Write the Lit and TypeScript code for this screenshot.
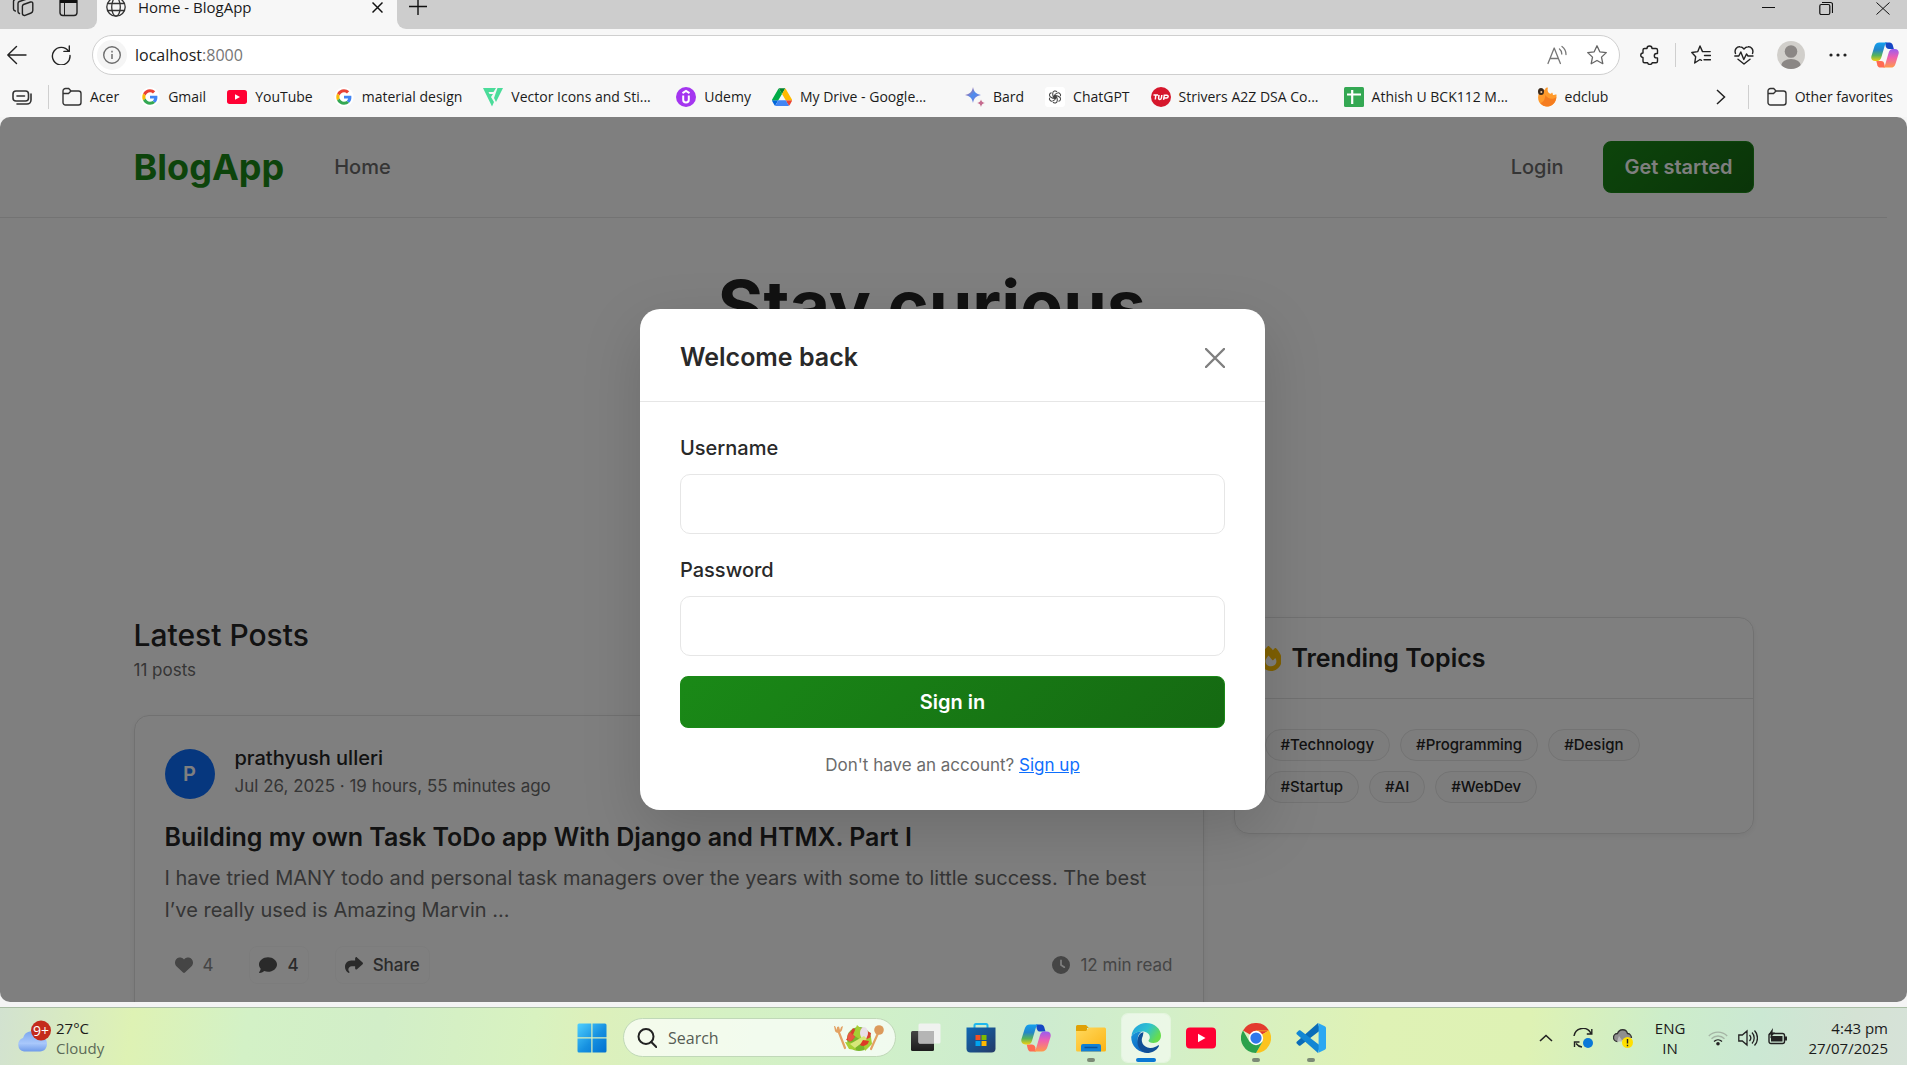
import { LitElement, html, css, svg, TemplateResult } from "lit";
import { customElement } from "lit/decorators.js";

/* ---------- shared icons ---------- */

const folder = html`<svg class="i20" viewBox="0 0 20 20" fill="none" stroke="#333" stroke-width="1.4">
  <path d="M1 5.500V4a2.500 2.500 0 0 1 2.500-2.500h3.200L9 4h7.500A2.500 2.500 0 0 1 19 6.500v9a2.500 2.500 0 0 1-2.500 2.500h-13A2.500 2.500 0 0 1 1 15.500z"/>
  <path d="M1 6.500h5.500L9 4"/></svg>`;

const google = html`<svg class="i20" viewBox="-7 -7 62 62">
  <circle cx="24" cy="24" r="30" fill="#fff"/>
  <path fill="#EA4335" d="M24 9.500c3.540 0 6.710 1.220 9.210 3.600l6.850-6.850C35.900 2.380 30.470 0 24 0 14.620 0 6.510 5.380 2.560 13.220l7.980 6.190C12.430 13.720 17.740 9.500 24 9.500z"/>
  <path fill="#4285F4" d="M46.980 24.550c0-1.570-.15-3.090-.38-4.550H24v9.020h12.940c-.58 2.960-2.260 5.480-4.780 7.180l7.730 6c4.510-4.180 7.090-10.360 7.090-17.650z"/>
  <path fill="#FBBC05" d="M10.530 28.590c-.48-1.450-.76-2.990-.76-4.590s.27-3.140.76-4.590l-7.980-6.190C.92 16.460 0 20.120 0 24c0 3.880.92 7.540 2.560 10.780l7.970-6.190z"/>
  <path fill="#34A853" d="M24 48c6.480 0 11.930-2.130 15.890-5.810l-7.730-6c-2.150 1.450-4.920 2.300-8.160 2.300-6.260 0-11.570-4.220-13.470-9.910l-7.980 6.190C6.510 42.620 14.620 48 24 48z"/></svg>`;

const youtube = (cls: string) => html`<svg class=${cls} viewBox="0 0 30 30">
  <rect x="0" y="4.500" width="30" height="21" rx="4" fill="#ff0033"/><path d="M12 10.800v8.400l7.500-4.200z" fill="#fff"/></svg>`;

const copilot = (cls: string, id: string) => html`<svg class=${cls} viewBox="0 0 30 30">
  <defs>
    <linearGradient id="${id}a" x1="0" y1="0" x2="0" y2="1"><stop offset="0" stop-color="#12a0f0"/><stop offset=".4" stop-color="#2386c9"/><stop offset=".7" stop-color="#58b35a"/><stop offset="1" stop-color="#f2cf10"/></linearGradient>
    <linearGradient id="${id}b" x1="0" y1="0" x2="0" y2="1"><stop offset="0" stop-color="#9a5cf0"/><stop offset=".45" stop-color="#ee5fb0"/><stop offset="1" stop-color="#ff9a4a"/></linearGradient>
  </defs>
  <path d="M15 1.500h5c1.600 0 2.700 1 3.200 2.600l1.300 4.400h-5.200c-2 0-2.900-.8-3.500-2.800z" fill="#1547c4"/>
  <path d="M15 28.500h-5c-1.600 0-2.700-1-3.200-2.600L5.700 21.500h5c2 0 3 .8 3.500 2.800z" fill="#ff6b52"/>
  <path d="M9 1.500h8.500c-1.600.4-2.200 1.700-2.800 3.700l-3.600 12.300c-.7 2.500-2 4-4.600 4H4.300C1.200 21.500-.4 19 .5 16L3.700 5.700C4.500 3 6.200 1.500 9 1.500z" fill="url(#${id}a)"/>
  <path d="M21 28.500h-8.500c1.600-.4 2.200-1.700 2.800-3.700l3.600-12.300c.7-2.500 2-4 4.600-4h2.200c3.100 0 4.700 2.500 3.800 5.500l-3.200 10.300c-.8 2.700-2.500 4.200-5.300 4.200z" fill="url(#${id}b)"/></svg>`;

const fa = (w: number, d: string) => html`<svg class="fa" viewBox="0 0 ${w} 512"><path fill="currentColor" d=${d}/></svg>`;

const iconCss = css`
  * { box-sizing: border-box; }
  svg { display: block; flex: none; }
  button { font: inherit; color: inherit; background: none; border: 0; padding: 0; margin: 0; cursor: pointer; display: flex; align-items: center; justify-content: center; }
  .i20 { width: 20px; height: 20px; }
  .i28 { width: 28px; height: 28px; }
  .i30 { width: 30px; height: 30px; }
`;

/* ---------- browser chrome ---------- */

const favourites: { label: string; icon: TemplateResult; clipped?: boolean }[] = [
  { label: "Acer", icon: folder },
  { label: "Gmail", icon: google },
  { label: "YouTube", icon: youtube("i20") },
  { label: "material design", icon: google },
  { label: "Vector Icons and Sti...", clipped: true, icon: html`<svg class="i20" viewBox="0 0 20 20"><path d="M0 1h13l-2.500 4H5.500l1 2H10L8 10l3 5-2 4.500z" fill="#4bdc9a"/><path d="M14.500 1H20l-7 14-2-4z" fill="#4bdc9a"/></svg>` },
  { label: "Udemy", icon: html`<svg class="i20" viewBox="0 0 20 20"><circle cx="10" cy="10" r="10" fill="#a435f0"/><path d="M6.500 6.200 10 4l3.500 2.200M7.200 8.500v4.200a2.800 2.800 0 0 0 5.600 0V8.500" fill="none" stroke="#fff" stroke-width="2"/></svg>` },
  { label: "My Drive - Google...", clipped: true, icon: html`<svg class="i20" viewBox="0 0 87 87"><g transform="translate(0 5)"><path d="M6.600 66.850l3.850 6.650c.8 1.400 1.950 2.500 3.300 3.300L27.500 53H0c0 1.550.4 3.100 1.200 4.500z" fill="#0066da"/><path d="M43.650 25 29.900 1.200c-1.350.8-2.500 1.900-3.300 3.300l-25.400 44A9 9 0 0 0 0 53h27.500z" fill="#00ac47"/><path d="M73.550 76.800c1.350-.8 2.500-1.900 3.300-3.300l1.600-2.750L86.100 57.500c.8-1.400 1.200-2.950 1.200-4.500H59.800l5.850 11.500z" fill="#ea4335"/><path d="M43.650 25 57.400 1.200C56.050.4 54.500 0 52.900 0H34.400c-1.600 0-3.150.45-4.500 1.200z" fill="#00832d"/><path d="M59.800 53H27.500L13.750 76.800c1.350.8 2.900 1.200 4.500 1.200h50.800c1.600 0 3.150-.45 4.500-1.200z" fill="#4285f4"/><path d="M73.400 26.500 60.700 4.500c-.8-1.400-1.950-2.500-3.300-3.300L43.650 25 59.800 53h27.450c0-1.550-.4-3.100-1.200-4.500z" fill="#ffba00"/></g></svg>` },
  { label: "Bard", icon: html`<svg class="i20" viewBox="0 0 20 20"><defs><linearGradient id="bd" x1="0" y1="0" x2="1" y2="1"><stop offset="0" stop-color="#e0627a"/><stop offset=".5" stop-color="#4c8df0"/><stop offset="1" stop-color="#9a6ec0"/></linearGradient></defs><path d="M8 0c1 5 3 7 8 8-5 1-7 3-8 8-1-5-3-7-8-8 5-1 7-3 8-8z" fill="url(#bd)"/><path d="M16 12.500c.5 2 1.500 3 3.800 3.500-2.300.5-3.300 1.500-3.800 4-.5-2.500-1.500-3.500-3.800-4 2.300-.5 3.300-1.500 3.800-3.500z" fill="#c56a8e"/></svg>` },
  { label: "ChatGPT", icon: html`<svg class="i20" viewBox="0 0 20 20"><rect width="20" height="20" rx="3" fill="#fff"/><g transform="translate(2 2) scale(.8)" fill="none" stroke="#444" stroke-width="1.300">${[0, 60, 120, 180, 240, 300].map((a) => svg`<path transform="rotate(${a} 10 10)" d="M7.200 8.400V5.200a2.900 2.900 0 0 1 5.300-1.500M7.200 8.400l4.200 2.400M9.300 12V7.200"/>`)}</g></svg>` },
  { label: "Strivers A2Z DSA Co...", clipped: true, icon: html`<svg class="i20" viewBox="0 0 20 20"><circle cx="10" cy="10" r="10" fill="#d6172c"/><path d="M2.500 8h4.600M4.800 8l-.5 4.500M8 8l-.4 3c-.1 1 .3 1.400 1.200 1.400s1.500-.4 1.600-1.400l.4-3M12.600 12.800l.7-4.600h2.500c2 0 1.700 2.800-.4 2.800H13" fill="none" stroke="#fff" stroke-width="1.500"/></svg>` },
  { label: "Athish U BCK112 M...", clipped: true, icon: html`<svg class="i20" viewBox="0 0 20 20"><rect width="20" height="20" rx="1.500" fill="#34a853"/><path d="M8.200 3v14M3 7.500h14" stroke="#fff" stroke-width="2.200"/></svg>` },
  { label: "edclub", icon: html`<svg class="i20" viewBox="0 0 20 20"><path d="M2 6c2-4 5-4 6-3 0-2 2-3 3-2-1 2 0 4 1 5 1 1 2 1 3-.5 1 1 1 2 .8 2.500 1.500 0 2.500-.5 3.700-.5.500 7-3.500 12-9.500 12C4 19.500-1 14 2 6z" fill="#ff9a2b"/><path d="M10 19.500c5 0 9-4 9.300-9.500-3 3-9 2-11-2 0 5-3 8-5 8 2 2.500 4 3.500 6.700 3.500z" fill="#f57c1f"/><ellipse cx="4" cy="4.500" rx="3" ry="3.600" fill="#3b2a1c"/><circle cx="4.300" cy="5" r="1" fill="#f5c99a"/></svg>` },
];

@customElement("browser-chrome")
class BrowserChrome extends LitElement {
  static styles = [iconCss, css`
    :host { display: block; background: #f7f7f7; color: #1b1b1b; font: 14px/20px "Segoe UI", "Open Sans", "Noto Sans", sans-serif; }
    .tabs { display: flex; height: 29px; background: #f7f7f7; }
    .left { width: 97px; background: #cdcdcd; border-bottom-right-radius: 9px; display: flex; gap: 24px; padding: 0 0 12px 12px; align-items: flex-end; }
    .tab { width: 300px; display: flex; align-items: flex-end; gap: 12px; padding: 0 14px 12px 9px; font-size: 15px; line-height: 14px; }
    .tab .title { flex: 1; padding-bottom: 3px; }
    .right { flex: 1; background: #cdcdcd; border-bottom-left-radius: 9px; display: flex; align-items: flex-start; padding: 0 17px 0 12px; }
    .win { margin-left: auto; display: flex; gap: 43px; }
    .bar { display: flex; align-items: center; height: 52px; padding: 0 8px 0 7px; }
    .nav { display: flex; gap: 24px; width: 85px; }
    .address { flex: 1; height: 40px; display: flex; align-items: center; gap: 8px; background: #fff; border: 1px solid #cfcfcf; border-radius: 20px; padding: 0 12px 0 4px; font-size: 16px; }
    .address .info { width: 30px; height: 30px; border-radius: 50%; background: #f5f5f5; }
    .address .url { flex: 1; }
    .address .port { color: #767676; }
    .address .acts { display: flex; gap: 20px; }
    .tools { display: flex; align-items: center; gap: 23px; margin-left: 20px; }
    .sep { width: 1px; height: 24px; background: #cfcfcf; }
    .tools .sep { margin: 0 -8px; }
    .favs { display: flex; align-items: center; height: 36px; padding: 0 14px 4px 12px; white-space: nowrap; }
    .favs > .sep { margin: 0 13px 0 16px; }
    .favs a { display: flex; align-items: center; gap: 8px; color: inherit; text-decoration: none; margin-right: 21px; }
    .favs a:last-child { margin: 0; }
    .clipped { min-width: 144px; }
    .more { margin-left: auto; }
    .favs > .sep.end { margin: 0 18px 0 22px; }
  `];

  render() {
    const s = (d: string, cls = "i20", w = 1.4, c = "#222") => html`<svg class=${cls} viewBox="0 0 20 20" fill="none" stroke=${c} stroke-width=${w} stroke-linecap="round" stroke-linejoin="round"><path d=${d}/></svg>`;
    return html`
      <div class="tabs">
        <div class="left">
          <button aria-label="Workspaces"><svg width="22" height="20" viewBox="0 0 22 20" fill="none" stroke="#222" stroke-width="1.400" stroke-linecap="round"><path d="M11.500 7.500 18.500 5a1.700 1.700 0 0 1 2.300 1.600v7a2.600 2.600 0 0 1-1.700 2.400l-6 2.400a2 2 0 0 1-2.700-1.800V9.200a2 2 0 0 1 1.100-1.700zM7.500 16.500C6.400 16.200 6 15.500 6 14.500V6.500c0-1 .5-1.700 1.300-2L15 2M3.300 14C2 13.700 1.500 13 1.500 12V4.500c0-1 .5-1.700 1.300-2L10 0"/></svg></button>
          <button aria-label="Tab actions"><svg class="i20" viewBox="0 0 20 20"><rect x="2" y="1" width="17" height="17.500" rx="3" fill="none" stroke="#222" stroke-width="1.400"/><path d="M2 1h17v5H2z" fill="#111"/><path d="M6.500 6v12" stroke="#222"/></svg></button>
        </div>
        <div class="tab">
          <svg class="i20" viewBox="0 0 20 20" fill="none" stroke="#333" stroke-width="1.300"><circle cx="10" cy="10" r="9.200"/><ellipse cx="10" cy="10" rx="4.300" ry="9.200"/><path d="M1.800 6.500h16.400M1.800 13.500h16.400"/></svg>
          <span class="title">Home - BlogApp</span>
          <button aria-label="Close tab"><svg width="11" height="16" viewBox="0 0 11 16"><path d="M.5 1.500l10 10M10.500 1.500l-10 10" stroke="#111" stroke-width="1.500"/></svg></button>
        </div>
        <div class="right">
          <button aria-label="New tab"><svg width="18" height="16" viewBox="0 0 18 16"><path d="M0 6.500h18M9 0v15" stroke="#111" stroke-width="1.400"/></svg></button>
          <div class="win">
            <button aria-label="Minimise"><svg width="14" height="16" viewBox="0 0 14 16"><path d="M0 7.500h13" stroke="#111"/></svg></button>
            <button aria-label="Restore"><svg width="14" height="16" viewBox="0 0 14 16" fill="none" stroke="#111" stroke-width="1.200"><rect x=".8" y="4.500" width="10" height="10" rx="1.500"/><path d="M3 2.500h8.500a2 2 0 0 1 2 2V13"/></svg></button>
            <button aria-label="Close"><svg width="14" height="16" viewBox="0 0 14 16"><path d="M.5 2.500l13 12M13.500 2.500l-13 12" stroke="#111"/></svg></button>
          </div>
        </div>
      </div>
      <div class="bar">
        <div class="nav">
          <button aria-label="Back">${s("M19 10H.8M9.500 1.500.8 10l8.700 8.500")}</button>
          <button aria-label="Refresh">${s("M17.500 6.200A8.800 8.800 0 1 0 19 10.500M18.300 1v5.400h-5.400")}</button>
        </div>
        <div class="address">
          <button class="info" aria-label="Site information"><svg class="i20" viewBox="0 0 20 20"><circle cx="10" cy="10" r="8.300" fill="none" stroke="#6d6d6d" stroke-width="1.400"/><path d="M10 9v5M10 5.800v1.600" stroke="#6d6d6d" stroke-width="1.500"/></svg></button>
          <span class="url">localhost<span class="port">:8000</span></span>
          <div class="acts">
            <button aria-label="Read aloud">${s("M1 18.500 7.200 3l6.200 15.500M3 13.500h8.400M12.500 4c1.600 1.200 2.300 2.800 2.300 5M15 1.500c2.800 2 4 4.200 4 8", "i20", 1.3, "#777")}</button>
            <button aria-label="Add to favourites">${s("m10 .8 2.800 6 6.500.8-4.800 4.500 1.300 6.600L10 15.500l-5.800 3.200 1.300-6.600L.7 7.600l6.500-.8z", "i20", 1.3, "#666")}</button>
          </div>
        </div>
        <div class="tools">
          <button aria-label="Extensions">${s("M7 3.500a2.500 2.500 0 0 1 5 0h4a1.500 1.500 0 0 1 1.500 1.500v3.500h-1a2.200 2.200 0 0 0 0 4.400h1v3.300a1.500 1.500 0 0 1-1.500 1.500h-3.800a2.400 2.400 0 0 1-4.600 0H4.500A1.500 1.500 0 0 1 3 16.200V12.500a2.200 2.200 0 0 1 0-4.500V5a1.500 1.500 0 0 1 1.500-1.500z")}</button>
          <span class="sep"></span>
          <button aria-label="Favourites">${s("M10.500 15.300 9 14.500l-5.300 3.500 1-6.300L.8 7.500l6-.9L9 1l2.500 5.600h7.700M13.500 10.500h6M13 14.800h6.500")}</button>
          <button aria-label="Browser essentials">${s("M1.500 8.500C0 4.500 3 1.500 6 1.800c2 .1 3.200 1.200 4 2.200.8-1 2-2.100 4-2.200 3-.3 6 2.700 4.500 6.700M.8 11h4l2-4 3 7.500L12.500 9l1.500 2h5M4 14.200l6 4.800 6-4.800")}</button>
          <button aria-label="Profile"><svg class="i28" viewBox="0 0 28 28"><defs><clipPath id="pc"><circle cx="14" cy="14" r="14"/></clipPath></defs><circle cx="14" cy="14" r="14" fill="#d1cfcb"/><g clip-path="url(#pc)" fill="#8b8785"><circle cx="14" cy="10.500" r="6.300"/><ellipse cx="14" cy="25" rx="10" ry="7"/></g></svg></button>
          <button aria-label="Settings and more"><svg class="i20" viewBox="0 0 20 20" fill="#222"><circle cx="3" cy="10" r="1.600"/><circle cx="10" cy="10" r="1.600"/><circle cx="17" cy="10" r="1.600"/></svg></button>
          <button aria-label="Copilot">${copilot("i28", "t")}</button>
        </div>
      </div>
      <nav class="favs">
        <button aria-label="Collections"><svg class="i20" viewBox="0 0 20 20" fill="none" stroke="#333" stroke-width="1.600"><rect x="1" y="4" width="15.500" height="10" rx="3"/><path d="M5 9h7.500M19 7v6a4 4 0 0 1-4 4H5" stroke-linecap="round"/></svg></button>
        <span class="sep"></span>
        ${favourites.map((f) => html`<a href="#">${f.icon}<span class=${f.clipped ? "clipped" : ""}>${f.label}</span></a>`)}
        <button class="more" aria-label="More favourites"><svg width="10" height="16" viewBox="0 0 10 16"><path d="M1 1l7.500 7L1 15" fill="none" stroke="#222" stroke-width="1.500"/></svg></button>
        <span class="sep end"></span>
        <a href="#">${folder}<span>Other favorites</span></a>
      </nav>`;
  }
}

/* ---------- blog page ---------- */

const topics = ["#Technology", "#Programming", "#Design", "#Startup", "#AI", "#WebDev"];

@customElement("blog-page")
class BlogPage extends LitElement {
  static styles = [iconCss, css`
    :host { display: block; position: relative; overflow: hidden; background: #fff; border-radius: 10px; color: #242424; font: 20px/30px Inter, "Liberation Sans", sans-serif; }
    h1, h2, h3, p { margin: 0; }
    a { color: inherit; text-decoration: none; }
    .page { padding-right: 20px; }
    .container { max-width: 1620px; margin: 0 auto; }
    .top { border-bottom: 1px solid #e6e6e6; }
    .top .container { display: flex; align-items: center; height: 100px; font-weight: 500; color: #6b6b6b; }
    .brand { font-size: 36px; line-height: 44px; font-weight: 700; color: #1a8917; margin-right: 50px; }
    .login { margin-left: auto; margin-right: 40px; }
    .cta { height: 52px; border: 1px solid #1a8917; border-radius: 8px; background: linear-gradient(135deg, #1a8917, #156912); color: #fff; font-weight: 600; }
    .top .cta { padding: 0 20px; }
    .hero { min-height: 399px; padding-top: 46px; text-align: center; }
    .hero h1 { font-size: 70px; line-height: 84px; font-weight: 700; }
    .cols { display: grid; grid-template-columns: 107fr 52fr; gap: 30px; align-items: start; }
    .cols h2 { font-size: 30px; line-height: 36px; font-weight: 500; }
    .count { font-size: 17px; line-height: 26px; margin: 4px 0 32px; color: #6b6b6b; }
    .card { border: 1px solid #e3e3e3; border-radius: 15px; box-shadow: 0 2px 6px rgba(0, 0, 0, 0.06); }
    .post { padding: 30px; min-height: 340px; }
    .author { display: flex; align-items: center; gap: 20px; margin-bottom: 20px; }
    .avatar { width: 50px; height: 50px; border-radius: 50%; background: #0d6efd; color: #fff; font-weight: 600; display: grid; place-items: center; }
    .who { display: grid; gap: 4px; line-height: 24px; padding-bottom: 4px; font-weight: 500; }
    .meta { font-size: 17px; font-weight: 400; color: #6b6b6b; }
    .post h3, .trend h3 { font-size: 25px; line-height: 30px; font-weight: 600; }
    .text { margin: 10px 0 20px; line-height: 32px; color: #6b6b6b; }
    .acts { display: flex; align-items: center; gap: 26px; font-size: 17px; color: #555; }
    .acts button { height: 38px; padding: 0 9px; gap: 10px; border: 1px solid #f9f9f9; border-radius: 8px; font-weight: 500; }
    .acts .like { font-weight: 400; color: #8a8a8a; border-color: transparent; }
    .read { margin-left: auto; display: flex; align-items: center; gap: 10px; color: #8a8a8a; }
    .fa { height: 18px; }
    .trend .head { display: flex; align-items: center; gap: 10px; padding: 25px; border-bottom: 1px solid #e3e3e3; }
    .fire { color: #ffc107; }
    .fire .fa { height: 25px; }
    .pills { display: flex; flex-wrap: wrap; gap: 10px; padding: 30px 90px 30px 30px; }
    .pills a { height: 32px; line-height: 30px; padding: 0 15px; font-size: 15px; font-weight: 500; border: 1px solid #e6e6e6; border-radius: 16px; background: #fafafa; }
    .overlay { position: absolute; inset: 0; display: grid; place-items: center; padding-right: 2px; background: rgba(0, 0, 0, 0.5); }
    .modal { width: 625px; background: #fff; border-radius: 20px; box-shadow: 0 20px 60px rgba(0, 0, 0, 0.15); color: #292929; }
    .mhead { display: flex; align-items: center; justify-content: space-between; padding: 30px 40px 25px; border-bottom: 1px solid #e6e6e6; }
    .mhead h2 { font-size: 25px; line-height: 37px; font-weight: 600; }
    form { display: flex; flex-direction: column; padding: 30px 40px 32px; }
    label { font-weight: 500; line-height: 32px; margin-bottom: 10px; }
    input { width: 100%; height: 60px; margin: 0 0 20px; padding: 0 20px; border: 1px solid #e6e6e6; border-radius: 10px; font: inherit; color: inherit; background: #fff; outline: none; }
    .foot { margin-top: 24px; font-size: 17px; line-height: 26px; text-align: center; color: #6b6b6b; }
    .foot a { color: #0d6efd; text-decoration: underline; }
  `];

  render() {
    return html`
      <div class="page">
        <header class="top"><div class="container">
          <a class="brand" href="#">BlogApp</a>
          <a href="#">Home</a>
          <a class="login" href="#">Login</a>
          <button class="cta">Get started</button>
        </div></header>
        <section class="hero"><h1>Stay curious.</h1></section>
        <div class="container cols">
          <main>
            <h2>Latest Posts</h2>
            <p class="count">11 posts</p>
            <article class="card post">
              <div class="author">
                <span class="avatar">P</span>
                <div class="who"><span>prathyush ulleri</span><span class="meta">Jul 26, 2025 · 19 hours, 55 minutes ago</span></div>
              </div>
              <h3>Building my own Task ToDo app With Django and HTMX. Part I</h3>
              <p class="text">I have tried MANY todo and personal task managers over the years with some to little success. The best I’ve really used is Amazing Marvin ...</p>
              <div class="acts">
                <button class="like">${fa(512, "M47.600 300.400 228.300 469.100c7.500 7 17.400 10.900 27.700 10.900s20.200-3.900 27.700-10.900L464.400 300.400c30.400-28.300 47.600-68 47.600-109.500v-5.800c0-69.900-50.500-129.500-119.400-141C347 36.500 300.600 51.400 268 84L256 96 244 84c-32.600-32.600-79-47.500-124.600-39.900C50.500 55.600 0 115.200 0 185.100v5.800c0 41.500 17.200 81.200 47.600 109.500z")}4</button>
                <button>${fa(512, "M512 240c0 114.900-114.600 208-256 208c-37.100 0-72.300-6.400-104.100-17.900c-11.900 8.700-31.300 20.600-54.300 30.600C73.600 471.100 44.700 480 16 480c-6.500 0-12.300-3.900-14.800-9.900c-2.500-6-1.100-12.800 3.400-17.400c2-2 13-15 21.700-29c10-16.600 19.500-38.400 21.400-62.900C17.700 326.800 0 285.100 0 240C0 125.100 114.600 32 256 32s256 93.100 256 208z")}4</button>
                <button>${fa(512, "M307 34.800c-11.500 5.100-19 16.600-19 29.200v64H176C78.800 128 0 206.800 0 304C0 417.300 81.500 467.900 100.200 478.100c2.500 1.400 5.300 1.900 8.100 1.900c10.900 0 19.700-8.900 19.700-19.700c0-7.500-4.300-14.400-9.800-19.500C108.800 431.900 96 414.400 96 384c0-53 43-96 96-96h96v64c0 12.600 7.400 24.100 19 29.200s25 3 34.400-5.400l160-144c6.700-6.100 10.600-14.700 10.600-23.800s-3.800-17.700-10.600-23.800l-160-144c-9.400-8.500-22.900-10.600-34.400-5.400z")}Share</button>
                <span class="read">${fa(512, "M256 0a256 256 0 1 1 0 512A256 256 0 1 1 256 0zM232 120V256c0 8 4 15.500 10.700 20l96 64c11 7.400 25.900 4.400 33.300-6.700s4.400-25.900-6.700-33.300L280 243.200V120c0-13.300-10.700-24-24-24s-24 10.700-24 24z")}12 min read</span>
              </div>
            </article>
          </main>
          <aside class="card trend">
            <div class="head">
              <span class="fire">${fa(448, "M159.300 5.400c7.800-7.300 19.900-7.200 27.700 .1c27.600 25.900 53.500 53.800 77.700 84c11-14.400 23.500-30.100 37-42.900c7.900-7.400 20.100-7.400 28 .1c34.600 33 63.900 76.600 84.500 118c20.300 40.800 33.800 82.500 33.800 111.900C448 404.200 348.200 512 224 512C98.400 512 0 404.100 0 276.500c0-38.400 17.800-85.300 45.400-131.700C73.300 97.700 112.700 48.600 159.300 5.400zM225.700 416c25.300 0 47.700-7 68.800-21c42.100-29.400 53.400-88.200 28.100-134.400c-4.500-9-16-9.600-22.500-2l-25.200 29.300c-6.600 7.600-18.500 7.400-24.700-.5c-16.500-21-46-58.500-62.800-79.800c-6.300-8-18.300-8.100-24.700-.1c-33.800 42.500-50.800 69.300-50.800 99.400C112 375.400 162.600 416 225.700 416z")}</span>
              <h3>Trending Topics</h3>
            </div>
            <div class="pills">${topics.map((t) => html`<a href="#">${t}</a>`)}</div>
          </aside>
        </div>
      </div>
      <div class="overlay">
        <section class="modal" role="dialog" aria-labelledby="mt">
          <div class="mhead">
            <h2 id="mt">Welcome back</h2>
            <button aria-label="Close"><svg class="i20" viewBox="0 0 20 20"><path d="M1 1l18 18M19 1 1 19" stroke="#7f7f7f" stroke-width="2.400" stroke-linecap="round"/></svg></button>
          </div>
          <form>
            <label for="user">Username</label>
            <input id="user" type="text">
            <label for="pass">Password</label>
            <input id="pass" type="password">
            <button class="cta" type="button">Sign in</button>
            <p class="foot">Don't have an account? <a href="#">Sign up</a></p>
          </form>
        </section>
      </div>`;
  }
}

/* ---------- taskbar ---------- */

@customElement("task-bar")
class TaskBar extends LitElement {
  static styles = [iconCss, css`
    :host { box-sizing: border-box; display: grid; grid-template-columns: 1fr auto 1fr; align-items: center; height: 58px; padding-top: 2px; border-top: 1px solid #a9bda4; color: #1b1b1b; font: 15px/20px "Segoe UI", "Open Sans", "Noto Sans", sans-serif;
      background: linear-gradient(98deg, #d2e2d0 0%, #def2b4 7%, #d3f1c6 13%, #d2eec8 20%, #d8f2c0 28%, #ddf0bb 31%, #d5f1c4 38%, #d0f0c9 46%, #cdebd0 54%, #d3efc8 61%, #dff2b5 72%, #def2b4 80%, #cdedca 87%, #cbe8d3 92%, #d4e2d4 97%, #d6e2d8 100%); }
    .weather { display: flex; align-items: center; gap: 4px; padding-left: 16px; }
    .sub { color: #5c6a58; }
    .apps { display: flex; align-items: center; gap: 7px; padding-right: 4px; }
    .app { width: 48px; height: 48px; border-radius: 6px; position: relative; }
    .app.on { background: rgba(255, 255, 255, 0.55); box-shadow: 0 0 0 1px rgba(255, 255, 255, 0.4); }
    .app.run::after, .app.on::after { content: ""; position: absolute; bottom: 0; left: 20px; width: 8px; height: 4px; border-radius: 2px; background: #7b8a76; }
    .app.on::after { left: 14px; width: 20px; background: #0a78d4; }
    .search { display: flex; align-items: center; gap: 11px; width: 273px; height: 39px; margin-right: -1px; padding: 0 10px 0 13px; border-radius: 20px; background: rgba(255, 255, 255, 0.7); border: 1px solid #c0d8b8; }
    .search input { flex: 1; min-width: 0; border: 0; padding: 0; background: none; outline: none; font: 16px/22px "Segoe UI", "Open Sans", "Noto Sans", sans-serif; color: #4a4f48; }
    .search input::placeholder { color: #565c54; opacity: 1; }
    .tray { display: flex; align-items: center; justify-content: flex-end; padding-right: 19px; gap: 20px; }
    .center { text-align: center; margin: 0 3px 0 2px; }
    .net { gap: 10px; }
    .end { text-align: right; }
  `];

  render() {
    const app = (label: string, state: string, icon: TemplateResult) => html`<button class="app ${state}" aria-label=${label}>${icon}</button>`;
    return html`
      <div class="weather">
        <svg width="36" height="36" viewBox="0 0 36 36"><defs><linearGradient id="cl" x1="0" y1="0" x2="0" y2="1"><stop offset="0" stop-color="#7aa6ee"/><stop offset=".6" stop-color="#a9c8fb"/><stop offset="1" stop-color="#6f9bea"/></linearGradient></defs><path d="M8 31.500a7 7 0 0 1-1-13.500 9 9 0 0 1 17-1.500c4 0 7 3 7 7.300s-2.500 7.700-7 7.700z" fill="url(#cl)"/><circle cx="25" cy="10.500" r="10" fill="#c42b1c"/><text x="25" y="15.500" text-anchor="middle" font-size="14" fill="#fff">9+</text></svg>
        <div><div>27°C</div><div class="sub">Cloudy</div></div>
      </div>
      <div class="apps">
        ${app("Start", "", html`<svg class="i30" viewBox="0 0 30 30"><defs><linearGradient id="st" x1="0" y1="0" x2="1" y2="1"><stop offset="0" stop-color="#4fd0ff"/><stop offset=".55" stop-color="#1690e0"/><stop offset="1" stop-color="#0070d0"/></linearGradient></defs><path d="M2 .5h12.300v13.800H.5V2A1.500 1.500 0 0 1 2 .5zM15.500.5H28A1.500 1.500 0 0 1 29.500 2v12.300h-14zM.5 15.600h13.800v13.900H2A1.500 1.500 0 0 1 .5 28zM15.500 15.600h14V28a1.500 1.500 0 0 1-1.500 1.500H15.500z" fill="url(#st)"/></svg>`)}
        <label class="search">
          <svg class="i20" viewBox="0 0 20 20" fill="none" stroke="#222" stroke-width="2" stroke-linecap="round"><circle cx="9" cy="8.500" r="7.500"/><path d="m14.300 14 5 5"/></svg>
          <input type="text" placeholder="Search" aria-label="Search">
          <svg width="52" height="28" viewBox="0 0 52 28"><path d="M5 6l7 18M46 7l-8 18" stroke="#e3a263" stroke-width="2.200" stroke-linecap="round"/><circle cx="46" cy="6" r="4.800" fill="#dc9a5c"/><path d="M1 2l1 5c1 3 6 2 7-1l1-4-2 1-1 3-1-3.500-2 .5v3L2 2z" fill="#e3a263"/><circle cx="26" cy="15" r="12" fill="#79b52d"/><path d="M13 16l7-12 5 4-6 9zM28 4l10 5-2 12-7-5z" fill="#d8412f"/><path d="M24 1l8 7-4 8-8-5zM12 18l9 1 2 7-7-1zM30 17l8-4 1 7-7 7z" fill="#a6cf34"/><path d="M17 8a6 6 0 0 0 0 10l5-5z" fill="#e85643"/><ellipse cx="31" cy="9" rx="4" ry="6" fill="#e9dfe9"/><path d="M17 20l14-8 3 3-12 9z" fill="#d8e77a"/><path d="M27 21a6 6 0 0 0 9-4l-6-1z" fill="#dd3a27"/></svg>
        </label>
        ${app("Task view", "", html`<svg class="i30" viewBox="0 0 30 30"><defs><linearGradient id="tv" x1="0" y1="0" x2="0" y2="1"><stop offset="0" stop-color="#444"/><stop offset="1" stop-color="#1c1c1c"/></linearGradient></defs><rect x="0" y="8" width="23" height="20" rx="1.500" fill="url(#tv)"/><rect x="7.500" y=".5" width="22" height="20" rx="1.500" fill="#f2f2f2" opacity=".93"/><path d="M7.500 8H23v12.500H9a1.500 1.500 0 0 1-1.500-1.500z" fill="#b5b5b5"/></svg>`)}
        ${app("Microsoft Store", "", html`<svg class="i30" viewBox="0 0 30 30"><defs><linearGradient id="ms" x1="0" y1="0" x2="1" y2="1"><stop offset="0" stop-color="#0f68b4"/><stop offset="1" stop-color="#243a66"/></linearGradient></defs><path d="M8.500 6V2.500a1.500 1.500 0 0 1 1.500-1.500h10a1.500 1.500 0 0 1 1.500 1.500V6" fill="none" stroke="#1fb8ee" stroke-width="2"/><path d="M.5 4.500h29v21a4 4 0 0 1-4 4h-21a4 4 0 0 1-4-4z" fill="url(#ms)"/><path d="M9.500 12h5v5h-5z" fill="#f25022"/><path d="M15.500 12h5v5h-5z" fill="#7fba00"/><path d="M9.500 18h5v5h-5z" fill="#00a4ef"/><path d="M15.500 18h5v5h-5z" fill="#ffb900"/></svg>`)}
        ${app("Copilot", "", copilot("i30", "b"))}
        ${app("File Explorer", "run", html`<svg class="i30" viewBox="0 0 30 30"><defs><linearGradient id="fe" x1="0" y1="0" x2="1" y2="1"><stop offset="0" stop-color="#ffd95e"/><stop offset="1" stop-color="#fcb414"/></linearGradient></defs><path d="M0 3.500A1.500 1.500 0 0 1 1.500 2H10l3 3h-2v4H0z" fill="#e0a106"/><path d="M0 8h10l3-3.500h15.500A1.500 1.500 0 0 1 30 6v21a1.500 1.500 0 0 1-1.500 1.500h-27A1.500 1.500 0 0 1 0 27z" fill="url(#fe)"/><path d="M5 28.500V23a2 2 0 0 1 2-2h16a2 2 0 0 1 2 2v5.500z" fill="#1180d6"/><path d="M8.500 24.500h13" stroke="#0a5299" stroke-width="1.500"/></svg>`)}
        ${app("Microsoft Edge", "on", html`<svg class="i30" viewBox="0 0 30 30"><defs><linearGradient id="e1" x1="0" y1="0" x2="1" y2=".5"><stop offset="0" stop-color="#229fe0"/><stop offset=".55" stop-color="#2fc2cf"/><stop offset="1" stop-color="#67dd4d"/></linearGradient><linearGradient id="e2" x1="0" y1="0" x2=".6" y2="1"><stop offset="0" stop-color="#1a98dc"/><stop offset="1" stop-color="#0c62c0"/></linearGradient></defs><path d="M.5 13C1.300 5.500 7.500 0 15 0c9 0 15 6.200 15 12.500 0 4.800-3.600 7.500-7.500 7.500-3.200 0-5-1-5-2.200 0-1 1.300-1.300 1.300-3.600 0-3-3-5.700-7.500-5.700-4.800 0-8.500 1.700-10.800 4.500z" fill="url(#e1)"/><path d="M.3 13.500C2.500 10 6.500 8.400 11 8.500c-2.500 1.200-4.300 4-4.300 7.500 0 7 5.300 12.500 11.300 13.300A15 15 0 0 1 .3 13.500z" fill="url(#e2)"/><path d="M11.800 13C9 18 12 24.500 19 25c3.800.2 6.200-1.500 8.200-2.700.6-.3 1 .3.7.9C25.500 27.500 21 30 16 30 9.500 29.300 6 23.500 6.500 17.500 7 13 9 9.500 12.500 9.300z" fill="#114f96"/></svg>`)}
        ${app("YouTube", "", youtube("i30"))}
        ${app("Google Chrome", "run", html`<svg class="i30" viewBox="0 0 48 48"><path d="M24 24 3.200 12A24 24 0 0 1 44.800 12z" fill="#e33b2e"/><path d="M24 24 44.800 12A24 24 0 0 1 24 48l10.400-18z" fill="#fcc31e"/><path d="M24 24l10.400 6L24 48A24 24 0 0 1 3.200 12L13.600 30z" fill="#2ba24c"/><path d="M24 13h21.300L44.800 12H24z" fill="#fcc31e"/><circle cx="24" cy="24" r="11.500" fill="#fff"/><circle cx="24" cy="24" r="9" fill="#2f78ec"/></svg>`)}
        ${app("Visual Studio Code", "run", html`<svg class="i30" viewBox="0 0 30 30"><path d="M22 0 1 18.500c-.8.7-.8 1.700 0 2.300l1.800 1.600c.5.400 1.100.4 1.700 0L24 7.500z" fill="#0a6cb8"/><path d="M22 30 1 11.500c-.8-.7-.8-1.700 0-2.300l1.800-1.600c.5-.4 1.100-.4 1.700 0L24 22.500z" fill="#1287d4"/><path d="M22 0l6.800 3.200c.8.400 1.200 1 1.200 1.800v20c0 .8-.4 1.400-1.200 1.800L22 30c.6-.5.600-1 .6-1.800V1.800C22.600 1 22.600.5 22 0z" fill="#2ba7f2"/></svg>`)}
      </div>
      <div class="tray">
        <button aria-label="Show hidden icons"><svg width="14" height="8" viewBox="0 0 14 8"><path d="M1 7l6-5.500L13 7" fill="none" stroke="#222" stroke-width="1.600"/></svg></button>
        <svg class="i20" viewBox="0 0 20 20" fill="none" stroke="#222" stroke-width="1.400"><path d="M1 8A9 9 0 0 1 18 5.500M18.800 1v5h-5M1.500 19v-5h5M3 15.500a9 9 0 0 0 6 3.500"/><circle cx="15" cy="15" r="5" fill="#0a78d8" stroke="none"/></svg>
        <svg class="i20" viewBox="0 0 20 20"><path d="M4.500 13.500a4 4 0 0 1 0-8C6 1 13 0 14.500 5.500c3 .2 4 3 4 4.500" fill="#8f8f8f" stroke="#333" stroke-width="1.300"/><path d="M4 13.500h6L6 8z" fill="#b9b9b9"/><circle cx="14.500" cy="14.500" r="5.500" fill="#ffe000"/><path d="M14.500 11v4.500M14.500 16.800v1.400" stroke="#222" stroke-width="1.400"/></svg>
        <div class="center"><div>ENG</div><div>IN</div></div>
        <button class="net" aria-label="Network, volume and battery">
          <svg class="i20" viewBox="0 0 20 20" fill="none" stroke-width="1.300"><path d="M.8 8a13 13 0 0 1 18.400 0M3.500 10.800a9 9 0 0 1 13 0" stroke="#a5b5a5"/><path d="M6 13.400a6 6 0 0 1 8 0" stroke="#222"/><circle cx="10" cy="15.800" r="1.800" fill="#222"/></svg>
          <svg class="i20" viewBox="0 0 20 20" fill="none" stroke="#222" stroke-width="1.300"><path d="M.8 7h3.500L9 3v14l-4.700-4H.8zM11.500 7a4.500 4.500 0 0 1 0 6M14 4.500a8 8 0 0 1 0 11M16.500 2.500a11 11 0 0 1 0 15"/></svg>
          <svg class="i20" viewBox="0 0 20 20"><rect x="1" y="5.500" width="15.500" height="10" rx="2" fill="none" stroke="#222" stroke-width="1.400"/><rect x="3" y="8" width="11.500" height="5.500" fill="#222"/><path d="M18 8.500v4" stroke="#222" stroke-width="2"/><path d="M5 0 .5 6.500H3L2 10.500 7 4.500H4.500z" fill="#222"/></svg>
        </button>
        <div class="end"><div>4:43 pm</div><div>27/07/2025</div></div>
      </div>`;
  }
}

@customElement("app-root")
class AppRoot extends LitElement {
  static styles = css`
    :host { display: flex; flex-direction: column; height: 100vh; overflow: hidden; background: #f4f4f4; }
    blog-page { flex: 1; min-height: 0; margin-bottom: 5px; }
  `;
  render() {
    return html`<browser-chrome></browser-chrome><blog-page></blog-page><task-bar></task-bar>`;
  }
}
